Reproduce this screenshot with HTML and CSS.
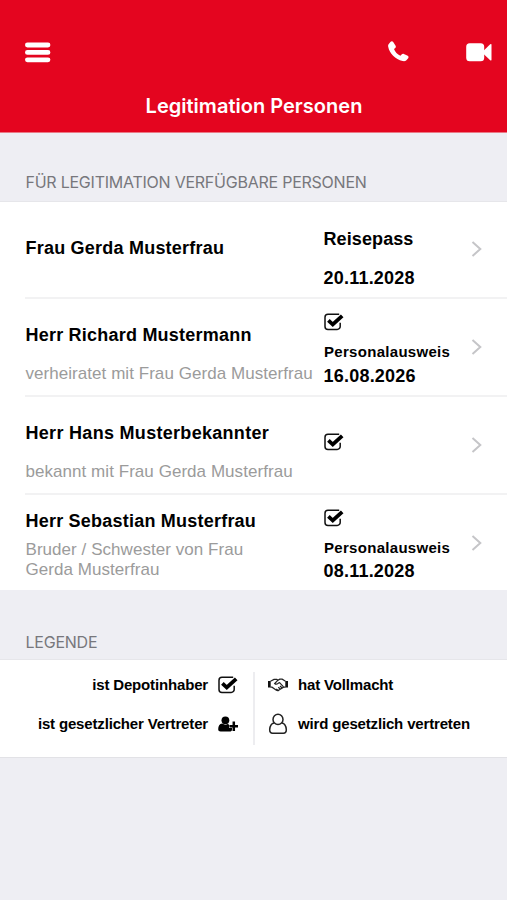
FILE: index.html
```html
<!DOCTYPE html>
<html lang="de">
<head>
<meta charset="utf-8">
<title>Legitimation Personen</title>
<link rel="stylesheet" href="styles.css">
</head>
<body>
<svg width="0" height="0" class="defs">
  <symbol id="check" viewBox="0 0 20 18"><path d="M15.2 1.2H4A3 3 0 0 0 1 4.2V13.4A3 3 0 0 0 4 16.4H13.2A3 3 0 0 0 16.2 13.4V9.8" fill="none" stroke="#111" stroke-width="1.5"/><path d="M4.4 7.3L8.8 11.5L18.2 2.9" fill="none" stroke="#000" stroke-width="3.8"/></symbol>
  <symbol id="chevron" viewBox="0 0 12 18"><path d="M1.5 2L9.3 9L1.5 16" fill="none" stroke="#c5c5c8" stroke-width="2"/></symbol>
</svg>
<header class="header">
  <div class="toolbar">
    <svg class="menu" width="26" height="21" viewBox="0 0 26 21"><path d="M2.4 3H23M2.4 10.4H23M2.4 17.8H23" stroke="#fff" stroke-width="4.8" stroke-linecap="round"/></svg>
    <svg class="phone" width="21" height="21" viewBox="0 0 21 21"><path d="M.6 3.2L2.4 1C3.2.2 4.5.1 5.2 1L7.6 4.8C8.1 5.7 7.9 6.6 7 7.2L6 8C7 10.9 9.4 13.3 12.4 14.8L13.6 13.4C14.2 12.7 15.1 12.5 15.9 12.9L19.7 14.8C20.6 15.3 20.8 16.4 20.2 17.2L18.4 19.3C17.5 20.2 16 20.4 14.6 20.1C7.4 18.5 1.4 12.2.2 5.8C0 4.8.1 3.8.6 3.2Z" fill="#fff"/></svg>
    <svg class="video" width="26" height="19" viewBox="0 0 26 19"><rect x=".2" y=".3" width="18" height="18" rx="3.5" fill="#fff"/><path d="M17.8 7.4L24.2 1.3Q25.5.4 25.5 1.8V16.8Q25.5 18.2 24.2 17.2L17.8 11.2Z" fill="#fff"/></svg>
  </div>
  <h1 class="title">Legitimation Personen</h1>
</header>
<main>
  <h2 class="section">FÜR LEGITIMATION VERFÜGBARE PERSONEN</h2>
  <ul class="people">
    <li class="row">
      <div class="person"><p class="name">Frau Gerda Musterfrau</p></div>
      <div class="doc spaced"><p class="kind">Reisepass</p><p class="date">20.11.2028</p></div>
      <svg class="go"><use href="#chevron"/></svg>
    </li>
    <li class="row">
      <div class="person"><p class="name">Herr Richard Mustermann</p><p class="relation">verheiratet mit Frau Gerda Musterfrau</p></div>
      <div class="doc"><svg class="check"><use href="#check"/></svg><p class="kind small">Personalausweis</p><p class="date">16.08.2026</p></div>
      <svg class="go"><use href="#chevron"/></svg>
    </li>
    <li class="row">
      <div class="person"><p class="name wide">Herr Hans Musterbekannter</p><p class="relation">bekannt mit Frau Gerda Musterfrau</p></div>
      <div class="doc centered"><svg class="check"><use href="#check"/></svg></div>
      <svg class="go"><use href="#chevron"/></svg>
    </li>
    <li class="row">
      <div class="person tight"><p class="name">Herr Sebastian Musterfrau</p><p class="relation">Bruder / Schwester von Frau<br>Gerda Musterfrau</p></div>
      <div class="doc"><svg class="check"><use href="#check"/></svg><p class="kind small">Personalausweis</p><p class="date">08.11.2028</p></div>
      <svg class="go"><use href="#chevron"/></svg>
    </li>
  </ul>
  <h2 class="section legend-title">LEGENDE</h2>
  <div class="legend">
    <div class="left">
      <p class="item"><span>ist Depotinhaber</span><svg class="check"><use href="#check"/></svg></p>
      <p class="item"><span>ist gesetzlicher Vertreter</span><svg width="20" height="16" viewBox="0 0 20 16"><circle cx="7.4" cy="4.3" r="3.9"/><path d="M4.2 7.6C1.4 8 .3 10 .2 13.2C.2 14.8 1.2 15.4 2.6 15.4H11.6C13.2 15.4 14 14.8 14 13.4V12H11V8.5Q9.2 7.7 8.8 8.2Q7.2 9.5 4.2 7.6Z"/><path d="M15.8 5.5V15M11.4 10.2H20" stroke="#000" stroke-width="2.5"/></svg></p>
    </div>
    <div class="right">
      <p class="item"><svg width="20" height="14" viewBox="0 0 20 14" fill="none" stroke="#222" stroke-width="1.2"><path d="M0 3H2.7V9.5H0ZM17.3 3H20V9.5H17.3Z" fill="#111" stroke="none"/><path d="M2.5 3.2L6 1.4H8.8L10 2.2L11.7 1.2H14.2L17.5 3.2M2.5 9.2H4L8.4 12.3Q9.8 13.2 11 12L15.6 9.2H17.5M10 2.2L6.7 5.5Q8.2 7 10.4 5.1L11.6 4.7L15.3 8.7M8.2 11L10 12.2M10.3 9.3L12 10.8M12 8L13.9 9.8"/></svg><span>hat Vollmacht</span></p>
      <p class="item"><svg width="20" height="22" viewBox="0 0 20 22" fill="none" stroke="#222" stroke-width="1.5"><path d="M6 10C3 10.5 2 13 1.7 16.5C1.6 19 2.6 20.2 4.6 20.2H15.4C17.4 20.2 18.4 19 18.3 16.5C18 13 17 10.5 14 10"/><ellipse cx="10" cy="6.4" rx="5" ry="5.2"/></svg><span>wird gesetzlich vertreten</span></p>
    </div>
  </div>
</main>
</body>
</html>
```
FILE: styles.css
```css
* { box-sizing: border-box; }
body { margin: 0; min-height: 900px; background: #eeeef3; color: #000; font-family: "Liberation Sans", sans-serif; }
p, h1, h2, ul { margin: 0; padding: 0; }
ul { list-style: none; }
svg { display: block; flex: none; }
.defs { display: none; }
.header { height: 133px; background: #e4051f; color: #fff; padding-top: 41px; border-bottom: 1px solid #ea7885; }
.toolbar { display: flex; height: 22px; padding: 0 15px 0 25px; align-items: flex-start; }
.menu { margin-top: 1px; }
.phone { margin-left: auto; margin-right: 57px; }
.video { margin-top: 2px; }
.title { margin-top: 31px; padding-left: 1px; text-align: center; font: 600 20px/24px Inter, sans-serif; letter-spacing: .02px; }
.section { height: 69px; padding: 38px 25.5px 0; font: 400 16px/22px Inter, sans-serif; letter-spacing: -.24px; color: #77777c; border-bottom: 1px solid #e6e6ea; }
.people { background: #fff; }
.row { display: grid; grid-template-columns: 298px 1fr 36px; height: 98px; margin-left: 25px; border-bottom: 2px solid #f2f2f3; }
.row:first-child { height: 97px; }
.row:last-child { height: 95px; border: 0; }
.person { padding: 25px 0 0 .5px; white-space: nowrap; }
.row:first-child .person { padding-top: 35px; }
.person.tight { padding-top: 15px; }
.name { font-weight: 700; font-size: 18px; line-height: 22px; letter-spacing: .22px; }
.name.wide { letter-spacing: .3px; }
.relation { margin-top: 18px; font-size: 17px; line-height: 20px; letter-spacing: .05px; color: #9b9b9b; }
.tight .relation { margin-top: 8px; line-height: 19.5px; }
.doc { padding: 14px 0 0 .5px; font-weight: 700; }
.check { width: 20px; height: 18px; }
.kind { font-size: 18px; line-height: 20px; letter-spacing: .1px; }
.kind.small { margin-top: 11px; padding-left: .5px; font-size: 15px; letter-spacing: .3px; }
.date { margin-top: 3px; font-size: 18px; line-height: 22px; letter-spacing: .22px; }
.row:last-child .date { margin-top: 2px; }
.spaced { padding-top: 27px; }
.spaced .date { margin-top: 18px; }
.centered { padding-top: 36px; }
.go { width: 12px; height: 18px; margin-top: 39px; }
.row:first-child .go { margin-top: 38px; }
.legend-title { height: 70px; padding-top: 41px; }
.legend { display: grid; grid-template-columns: 255px 1fr; height: 98px; padding: 12px 0; background: #fff; border-bottom: 1px solid #e2e2e6; font-weight: 700; font-size: 15px; line-height: 20px; letter-spacing: -.16px; }
.left { border-right: 2px solid #ededf0; padding-right: 15px; }
.right { padding-left: 13px; }
.item { display: flex; align-items: center; height: 26px; gap: 10px; }
.item + .item { margin-top: 13px; }
.left .item { justify-content: flex-end; }
```
